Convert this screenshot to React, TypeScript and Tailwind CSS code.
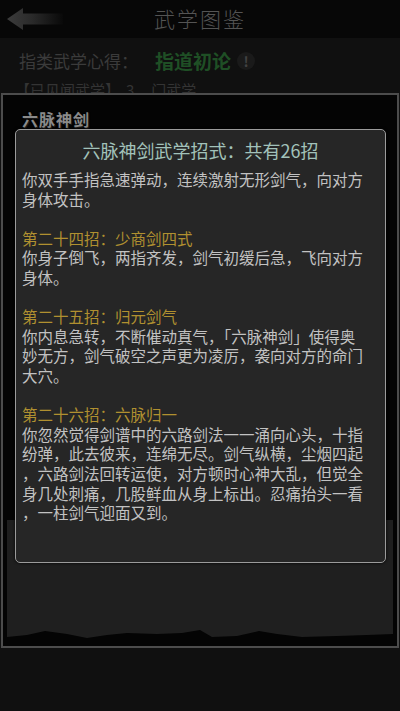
import { FC } from "react";

const FONT = "font-['Noto_Sans_CJK_SC','Noto_Sans',sans-serif]";

// one entry per rendered line; "" is an empty spacer line
const MOVE_LINES: { text: string; gold?: boolean }[] = [
  { text: "你双手手指急速弹动，连续激射无形剑气，向对方" },
  { text: "身体攻击。" },
  { text: "" },
  { text: "第二十四招：少商剑四式", gold: true },
  { text: "你身子倒飞，两指齐发，剑气初缓后急，飞向对方" },
  { text: "身体。" },
  { text: "" },
  { text: "第二十五招：归元剑气", gold: true },
  { text: "你内息急转，不断催动真气，「六脉神剑」使得奥" },
  { text: "妙无方，剑气破空之声更为凌厉，袭向对方的命门" },
  { text: "大穴。" },
  { text: "" },
  { text: "第二十六招：六脉归一", gold: true },
  { text: "你忽然觉得剑谱中的六路剑法一一涌向心头，十指" },
  { text: "纷弹，此去彼来，连绵无尽。剑气纵横，尘烟四起" },
  { text: "，六路剑法回转运使，对方顿时心神大乱，但觉全" },
  { text: "身几处刺痛，几股鲜血从身上标出。忍痛抬头一看" },
  { text: "，一柱剑气迎面又到。" },
];

const BackArrow: FC = () => (
  <svg width="56" height="24" viewBox="0 0 56 24">
    <defs>
      <linearGradient id="arrowFade" x1="0" y1="0" x2="1" y2="0">
        <stop offset="0" stopColor="#3c3c3c" />
        <stop offset="0.45" stopColor="#2a2a2a" />
        <stop offset="1" stopColor="#090909" />
      </linearGradient>
    </defs>
    <path d="M0 12 L16 1 L16 6.5 L56 6.5 L56 17.5 L16 17.5 L16 23 Z" fill="url(#arrowFade)" />
  </svg>
);

const Ridge: FC = () => (
  <svg
    className="absolute left-0 bottom-0"
    width="386"
    height="20"
    viewBox="0 0 386 20"
    preserveAspectRatio="none"
  >
    <path
      d="M0 11 L20 9 L38 5 L60 8 L80 12 L100 9 L120 7 L150 8 L175 7 L193 4 L205 11 L230 10 L252 5 L270 8 L295 11 L330 10 L360 9 L386 8 L386 20 L0 20 Z"
      fill="#040404"
    />
  </svg>
);

const App: FC = () => {
  return (
    <div className={`relative w-[400px] h-[711px] overflow-hidden bg-[#0c0c0c] ${FONT}`}>
      {/* top bar */}
      <div className="relative h-[38px] bg-[#070707] flex items-center justify-center">
        <div className="absolute left-[7px] top-[7px]">
          <BackArrow />
        </div>
        <span className="text-[21px] tracking-[2px] text-[#545454] font-light">武学图鉴</span>
      </div>

      {/* dimmed page content */}
      <div className="bg-[#101010] h-[673px] pl-[19px] pt-[10px]">
        <div className="flex items-center h-[26px]">
          <span className="text-[17px] text-[#3b3b3b]">指类武学心得：</span>
          <span className="ml-[17px] text-[19px] font-bold text-[#1f4f25]">指道初论</span>
          <span className="ml-[6px] w-[18px] h-[18px] rounded-full bg-[#1a1a1a] text-[#424242] text-[14px] font-bold flex items-center justify-center">
            !
          </span>
        </div>
        <div className="mt-[5px] text-[15px] text-[#343434] flex items-center">
          <span className="-ml-[4px]">【已见闻武学】</span>
          <span className="ml-[6px]">3</span>
          <span className="ml-[17px]">门武学</span>
        </div>
      </div>

      {/* martial art detail panel */}
      <div className="absolute left-[1px] top-[93px] w-[398px] h-[555px] border-2 border-[#4c4c4c] bg-[#040404] flex flex-col">
        <div className="pl-[19px] pt-[12px] text-[16px] font-bold tracking-[1px] text-[#8a8a8a] [text-shadow:0_0_2px_#000,1px_1px_0_#222]">
          六脉神剑
        </div>
        <div className="flex-1" />
        <div className="relative mx-[4px] h-[126px] bg-[#1f1f1f]">
          <Ridge />
        </div>
      </div>

      {/* moves popup */}
      <div className="absolute left-[15px] top-[129px] w-[371px] h-[434px] rounded-[5px] border-[1.5px] border-[#9b9b9b] bg-[#262626] shadow-[0_0_3px_#000]">
        <div className="pt-[8px] text-center text-[18px] leading-[24px] text-[#a2c2ba]">
          六脉神剑武学招式：共有26招
        </div>
        <div className="mt-[8px] pl-[6px] text-[15.5px] leading-[19.6px]">
          {MOVE_LINES.map((line, i) => (
            <div
              key={i}
              className={`h-[19.6px] whitespace-nowrap ${line.gold ? "text-[#b09030]" : "text-[#c2c2c2]"}`}
            >
              {line.text}
            </div>
          ))}
        </div>
      </div>
    </div>
  );
};

export default App;
